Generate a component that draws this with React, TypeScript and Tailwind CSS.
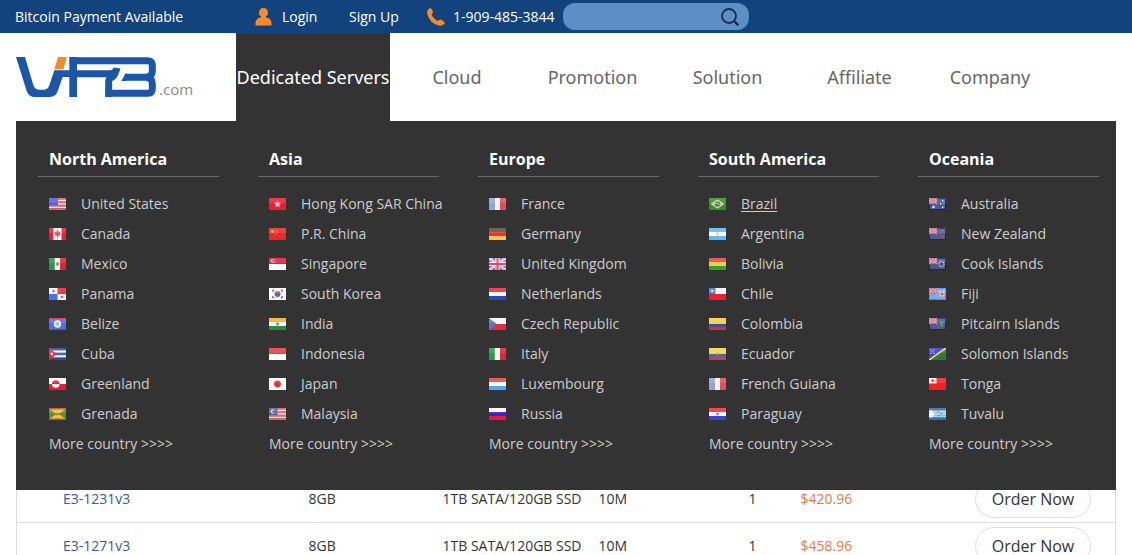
import { useState } from "react";
import type { ReactNode } from "react";

type FlagDef = { bands: string[]; vertical?: boolean; extra?: ReactNode };
type Country = { name: string; flag: FlagDef; underline?: boolean };

const RED = "#ee1c35";
const GREEN = "#27964a";
const NAVY = "#1d2463";

/* Small union jack used by the ensigns */
const jack = (
  <>
    <path d="M0 0h8v6H0z" fill="#5a5aa8" />
    <path d="M0 0l8 6M8 0L0 6" stroke="#e0a0b4" strokeWidth="1.2" />
    <path d="M4 0v6M0 3h8" stroke="#f3a3ae" strokeWidth="1.8" />
    <path d="M4 0v6M0 3h8" stroke="#dd4c5e" strokeWidth="0.8" />
  </>
);

const ensign = (field: string, badge: ReactNode): FlagDef => ({
  bands: [field],
  extra: (
    <>
      <path d="M1 1h15v10H1z" fill="#fff" opacity="0.25" />
      {jack}
      {badge}
    </>
  ),
});

const usStripes = ["#e8606c", "#fbe3e3", "#e8606c", "#fbe3e3", "#e8606c", "#fbe3e3", "#e8606c"];

/* ==========================================
    MENU DATA
    ========================================== */
const regions: { title: string; countries: Country[] }[] = [
  {
    title: "North America",
    countries: [
      { name: "United States", flag: { bands: usStripes, extra: <path d="M0 0h9v7H0z" fill="#5560d8" /> } },
      {
        name: "Canada",
        flag: {
          bands: [RED, "#f7f3f3", "#f7f3f3", RED],
          vertical: true,
          extra: <path d="M8.5 2l1 1.5 2 .5-.7 2 .2 1.5-2 .2v1.8H8V7.7l-2-.2.2-1.5L5.5 4l2-.5z" fill="#e4525f" />,
        },
      },
      { name: "Mexico", flag: { bands: [GREEN, "#f3f3ee", RED], vertical: true, extra: <ellipse cx="8.5" cy="6" rx="1.5" ry="2" fill="#a58c74" /> } },
      {
        name: "Panama",
        flag: {
          bands: ["#f8f4f6"],
          extra: (
            <>
              <path d="M8.5 0H17v6H8.5z" fill="#f0243c" />
              <path d="M0 6h8.5v6H0z" fill="#3f78ee" />
              <circle cx="4.5" cy="3" r="1.3" fill="#5c83e6" />
              <circle cx="13" cy="9" r="1.3" fill="#e05560" />
            </>
          ),
        },
      },
      {
        name: "Belize",
        flag: {
          bands: ["#5a6be0"],
          extra: (
            <>
              <path d="M0 .5h17M0 11.5h17" stroke="#d5255a" />
              <circle cx="8.5" cy="6" r="3.7" fill="#e4edf0" />
              <circle cx="8.5" cy="6" r="2" fill="#9cc9a8" />
            </>
          ),
        },
      },
      {
        name: "Cuba",
        flag: {
          bands: ["#2d49a3", "#f5f7fb", "#4567b8", "#f5f7fb", "#2d49a3"],
          extra: (
            <>
              <path d="M0 0l8 6-8 6z" fill="#e82c40" />
              <circle cx="2.8" cy="6" r="1.2" fill="#fff" />
            </>
          ),
        },
      },
      {
        name: "Greenland",
        flag: {
          bands: ["#fff", RED],
          extra: (
            <>
              <path d="M3 6a3.8 3.8 0 0 1 7.6 0z" fill={RED} />
              <path d="M3 6a3.8 3.8 0 0 0 7.6 0z" fill="#fff" />
            </>
          ),
        },
      },
      {
        name: "Grenada",
        flag: {
          bands: ["#d8402a"],
          extra: (
            <>
              <path d="M1 1.5h15v9H1z" fill="#f2c636" />
              <path d="M1 1.5L7.5 6 1 10.5zM16 1.5L9.5 6l6.5 4.5z" fill="#4b9a35" />
              <circle cx="8.5" cy="6" r="1.6" fill="#df6b2e" />
            </>
          ),
        },
      },
    ],
  },
  {
    title: "Asia",
    countries: [
      {
        name: "Hong Kong SAR China",
        flag: { bands: [RED], extra: <path d="M8.5 2.5l1 2.3 2.5.2-1.9 1.7.6 2.5-2.2-1.3-2.2 1.3.6-2.5L5 5l2.5-.2z" fill="#fbd3d6" /> },
      },
      {
        name: "P.R. China",
        flag: {
          bands: ["#e62a28"],
          extra: (
            <>
              <circle cx="3.5" cy="3.5" r="1.6" fill="#f8a83a" />
              <path d="M6.5 1.5h1v1h-1zM7.5 3.5h1v1h-1zM6.5 5.5h1v1h-1z" fill="#f8b040" />
            </>
          ),
        },
      },
      {
        name: "Singapore",
        flag: {
          bands: [RED, "#fff"],
          extra: (
            <>
              <circle cx="4" cy="3" r="2" fill="#fff" />
              <circle cx="4.9" cy="3" r="1.7" fill={RED} />
              <circle cx="5.7" cy="3" r=".8" fill="#fbb" />
            </>
          ),
        },
      },
      {
        name: "South Korea",
        flag: {
          bands: ["#fff"],
          extra: (
            <>
              <path d="M5.5 6a3 3 0 0 1 6 0z" fill="#d8455c" />
              <path d="M5.5 6a3 3 0 0 0 6 0z" fill="#4a67b5" />
              <path d="M3 3.5L5 2M12 2l2 1.5M3 8.5L5 10M12 10l2-1.5" stroke="#555" strokeWidth="1.3" />
            </>
          ),
        },
      },
      { name: "India", flag: { bands: ["#f8b02c", "#f6f6f0", "#2f8a3b"], extra: <circle cx="8.5" cy="6" r="1.7" fill="#8793ad" /> } },
      { name: "Indonesia", flag: { bands: ["#ea3a45", "#fff"] } },
      { name: "Japan", flag: { bands: ["#fff"], extra: <circle cx="8.5" cy="6" r="3.4" fill="#ef2b31" /> } },
      {
        name: "Malaysia",
        flag: {
          bands: usStripes,
          extra: (
            <>
              <path d="M0 0h8.5v7H0z" fill="#5a5c9c" />
              <circle cx="4" cy="3.5" r="2.2" fill="#f0dfa8" />
              <circle cx="4.9" cy="3.5" r="1.6" fill="#5a5c9c" />
            </>
          ),
        },
      },
    ],
  },
  {
    title: "Europe",
    countries: [
      { name: "France", flag: { bands: ["#93a3dc", "#f1f3f7", "#ee4a55"], vertical: true } },
      { name: "Germany", flag: { bands: ["#55504c", "#e2382f", "#f3c556"] } },
      {
        name: "United Kingdom",
        flag: {
          bands: ["#6f6cc0"],
          extra: (
            <>
              <path d="M0 0l17 12M17 0L0 12" stroke="#f6e8f0" strokeWidth="2.6" />
              <path d="M0 0l17 12M17 0L0 12" stroke="#e88a9a" strokeWidth=".8" />
              <path d="M8.5 0v12M0 6h17" stroke="#fff" strokeWidth="4" />
              <path d="M8.5 0v12M0 6h17" stroke="#e5485c" strokeWidth="2.2" />
            </>
          ),
        },
      },
      { name: "Netherlands", flag: { bands: ["#ee2b36", "#f8f8fa", "#2350ac"] } },
      { name: "Czech Republic", flag: { bands: ["#f8f8fa", "#ea2b3b"], extra: <path d="M0 0l8 6-8 6z" fill="#4d7fc0" /> } },
      { name: "Italy", flag: { bands: ["#24a148", "#f6f6f2", RED], vertical: true } },
      { name: "Luxembourg", flag: { bands: ["#f0453f", "#fafafa", "#55a8f4"] } },
      { name: "Russia", flag: { bands: ["#fafafa", "#3c1fd6", "#ee1838"] } },
    ],
  },
  {
    title: "South America",
    countries: [
      {
        name: "Brazil",
        underline: true,
        flag: {
          bands: ["#2f8f2d"],
          extra: (
            <>
              <path d="M1.5 6l7-4.8 7 4.8-7 4.8z" fill="#e6dd55" />
              <circle cx="8.5" cy="6" r="2.8" fill="#4a6cb8" />
              <path d="M6 5.4q2.5-.4 5 1.4" stroke="#dfe9e4" strokeWidth=".7" fill="none" />
            </>
          ),
        },
      },
      { name: "Argentina", flag: { bands: ["#62b8f2", "#fdfdfb", "#62b8f2"], extra: <circle cx="8.5" cy="6" r="1.7" fill="#f1d68a" /> } },
      { name: "Bolivia", flag: { bands: ["#f04438", "#f2cf3e", "#2aa52f"] } },
      {
        name: "Chile",
        flag: {
          bands: ["#fafafc", "#ee1f2f"],
          extra: (
            <>
              <path d="M0 0h6.5v6H0z" fill="#3c7ae0" />
              <circle cx="3.2" cy="3" r="1.3" fill="#dde8fa" />
            </>
          ),
        },
      },
      { name: "Colombia", flag: { bands: ["#f8cf3f", "#f8cf3f", "#3c4f9c", "#df2b3f"] } },
      { name: "Ecuador", flag: { bands: ["#f5d548", "#f5d548", "#4d679f", "#e2343f"], extra: <circle cx="8.5" cy="6" r="1.3" fill="#b59c63" /> } },
      { name: "French Guiana", flag: { bands: ["#93a3dc", "#f1f3f7", "#ee4a55"], vertical: true } },
      { name: "Paraguay", flag: { bands: ["#ef2f3c", "#fafafa", "#3848cc"], extra: <circle cx="8.5" cy="6" r="1.6" fill="#d8806c" /> } },
    ],
  },
  {
    title: "Oceania",
    countries: [
      {
        name: "Australia",
        flag: ensign(
          "#0f2770",
          <>
            <circle cx="4.5" cy="9" r="1.3" fill="#e3e8f7" />
            <path d="M11 5h1.4v1.4H11zM13 2h1.4v1.4H13zM14.5 5h1v1h-1zM13 8.5h1.4v1.4H13z" fill="#e3e8f7" />
          </>
        ),
      },
      { name: "New Zealand", flag: ensign(NAVY, <path d="M11 4.5h1.3v1.3H11zM13 2h1.3v1.3H13zM14.5 4.5h1v1h-1zM13 8h1.4v1.4H13z" fill="#d35a72" />) },
      { name: "Cook Islands", flag: ensign("#14235f", <circle cx="12.5" cy="6" r="2.6" fill="none" stroke="#c6cee6" strokeWidth="1.2" strokeDasharray="1.2 .8" />) },
      {
        name: "Fiji",
        flag: ensign(
          "#4a8ff0",
          <>
            <path d="M10.5 3h5v4.5L13 10l-2.5-2.5z" fill="#f4e3e0" />
            <path d="M13 3v7M10.5 6h5" stroke="#e2604c" strokeWidth="1.3" />
          </>
        ),
      },
      { name: "Pitcairn Islands", flag: ensign("#1c2468", <path d="M11 3.5h3.5V7l-1.7 2.5L11 7z" fill="#4a9a63" />) },
      {
        name: "Solomon Islands",
        flag: {
          bands: ["#2a7a34"],
          extra: (
            <>
              <path d="M0 0h17L0 12z" fill="#3d3fc4" />
              <path d="M0 12L17 0" stroke="#f0e060" strokeWidth="1.6" />
              <path d="M1.5 1.5h1v1h-1zM4.5 1.5h1v1h-1zM3 3.2h1v1H3zM1.5 5h1v1h-1zM4.5 5h1v1h-1z" fill="#fff" />
            </>
          ),
        },
      },
      {
        name: "Tonga",
        flag: {
          bands: ["#f41f28"],
          extra: (
            <>
              <path d="M0 0h7.5v5.5H0z" fill="#fbeeee" />
              <path d="M3.7 1v3.5M2 2.7h3.5" stroke="#ee3540" strokeWidth="1.2" />
            </>
          ),
        },
      },
      {
        name: "Tuvalu",
        flag: {
          bands: ["#3e6ca0", "#a9dcf0", "#a9dcf0", "#a9dcf0", "#3e6ca0"],
          extra: (
            <>
              <path d="M0 2.5h3L6 6 3 9.5H0z" fill="#eef6f2" />
              <path d="M8 3.5h1.5V5H8zM11.5 5H13v1.5h-1.5zM9 7h1.5v1.5H9z" fill="#5f9a7a" />
            </>
          ),
        },
      },
    ],
  },
];

const navItems = [
  { label: "Cloud", width: "w-[134px]" },
  { label: "Promotion", width: "w-[137px]" },
  { label: "Solution", width: "w-[133px]" },
  { label: "Affiliate", width: "w-[131px]" },
  { label: "Company", width: "w-[130px]" },
];

const servers = [
  { cpu: "E3-1231v3", ram: "8GB", disk: "1TB SATA/120GB SSD", port: "10M", ip: "1", price: "$420.96" },
  { cpu: "E3-1271v3", ram: "8GB", disk: "1TB SATA/120GB SSD", port: "10M", ip: "1", price: "$458.96" },
];

function Flag({ bands, vertical, extra }: FlagDef) {
  const w = vertical ? 17 / bands.length : 17;
  const h = vertical ? 12 : 12 / bands.length;
  return (
    <svg viewBox="0 0 17 12" className="h-3 w-[17px] shrink-0" aria-hidden="true">
      {bands.map((color, i) => (
        <rect key={i} x={vertical ? i * w : 0} y={vertical ? 0 : i * h} width={w} height={h} fill={color} />
      ))}
      {extra}
      <path d="M0 0h17v5H0z" fill="#fff" opacity="0.12" />
    </svg>
  );
}

function Logo() {
  return (
    <a href="#home" aria-label="VPB.com" className="flex items-end">
      <svg viewBox="48 171 420 120" className="h-10 w-[140px]" fill="none" aria-hidden="true">
        <path d="M48 171h27l25 84q4 14 17 14h15q12 0 16-13l15-45h45v-40h23v120h-23v-60h-20l-15 43q-6 17-23 17h-45q-19 0-25-18z" fill="#1b57a6" />
        <g stroke="#1b57a6" strokeWidth="21">
          <path d="M209 182h232q16 0 16 14v17q0 18-20 19h-62M437 232q20 1 20 19v15q0 14-16 14H316" />
          <path d="M225 221h104q19 0 22-17M347 216q-4 12-12 16-9 4-9 14v45" />
        </g>
        <path d="M380 221h-4l-12 22h16z" fill="#1b57a6" />
        <path d="M174 171h27l-11 37h-27z" fill="#f58a2c" />
      </svg>
      <span className="pl-[3px] text-[15px] leading-4 text-[#8a8a8a]">.com</span>
    </a>
  );
}

function TopBar() {
  return (
    <div className="flex h-[33px] items-center bg-[#13437c] pl-[15px] text-sm text-white">
      <span className="w-60">Bitcoin Payment Available</span>
      <a href="#login" className="flex w-[94px] items-center gap-2.5">
        <svg viewBox="0 0 17 18" className="h-[18px] w-[17px]" fill="#f98a2b" aria-hidden="true">
          <path d="M8.5 0a4.5 4.7 0 0 1 2.5 8.6v.8c3.5.5 5.5 2.3 5.5 5.6v2.5H.5V15c0-3.3 2-5.1 5.5-5.6v-.8A4.5 4.7 0 0 1 8.5 0z" />
        </svg>
        Login
      </a>
      <a href="#signup" className="w-[78px]">Sign Up</a>
      <a href="tel:19094853844" className="flex w-[136px] items-center gap-2">
        <svg viewBox="0 0 18 18" className="size-[18px]" fill="#f98a2b" aria-hidden="true">
          <path d="M1.2 1.2Q2.5-.2 4 .3q1.5 1.5 2 3.6 0 1.2-1.5 2.2.8 3.5 5.5 6.6 1.3.4 2.5-1 1.5-.5 4.8 2.2.8.9.2 1.8-2 2.5-5 2.1Q2.5 15.5.2 5.5 0 3 1.2 1.2z" />
        </svg>
        1-909-485-3844
      </a>
      <form className="flex h-[27px] w-[186px] items-center rounded-xl bg-[#5b8fc6] pr-2.5 pl-3">
        <input type="search" aria-label="Search" className="min-w-0 flex-1 bg-transparent outline-none" />
        <button type="button" aria-label="Search">
          <svg viewBox="0 0 18 18" className="size-[18px]" fill="none" stroke="#152c46" strokeWidth="1.8" aria-hidden="true">
            <circle cx="8" cy="8" r="7" />
            <path d="M13 13l4.3 4.3" strokeWidth="2.4" />
          </svg>
        </button>
      </form>
    </div>
  );
}

function MegaMenu() {
  return (
    <div className="absolute inset-x-4 top-full z-10 grid h-[369px] grid-cols-5 bg-[#333333] text-sm text-[#cccccc]">
      {regions.map((region) => (
        <section key={region.title} className="pt-[25px] pr-[17px] pl-[22px]">
          <h2 className="border-b border-[#686868] pb-1 pl-[11px] text-base leading-[26px] font-bold text-white">{region.title}</h2>
          <ul className="pt-3 pl-[11px]">
            {region.countries.map((country) => (
              <li key={country.name} className="flex h-[30px] items-center gap-[15px] whitespace-nowrap">
                <Flag {...country.flag} />
                <a href="#country" className={country.underline ? "underline underline-offset-2" : "hover:underline"}>{country.name}</a>
              </li>
            ))}
            <li className="flex h-[30px] items-center">
              <a href="#more">More country &gt;&gt;&gt;&gt;</a>
            </li>
          </ul>
        </section>
      ))}
    </div>
  );
}

export default function App() {
  const [menuOpen, setMenuOpen] = useState(true);

  return (
    <div className="h-screen overflow-hidden bg-white font-['Open_Sans','Noto_Sans',sans-serif]">
      <TopBar />

      {/* ==========================================
          MAIN NAVIGATION
          ========================================== */}
      <header className="relative flex h-[88px] items-center pl-4">
        <div className="w-[220px]">
          <Logo />
        </div>
        <nav className="flex h-full items-center font-['Noto_Sans',sans-serif] text-lg text-[#666666]">
          <button
            type="button"
            aria-expanded={menuOpen}
            onClick={() => setMenuOpen(!menuOpen)}
            className="h-full w-[154px] bg-[#333333] text-center whitespace-nowrap text-white"
          >
            Dedicated Servers
          </button>
          {navItems.map((item) => (
            <a key={item.label} href="#nav" className={`${item.width} text-center`}>{item.label}</a>
          ))}
        </nav>
        {menuOpen && <MegaMenu />}
      </header>

      {/* ==========================================
          SERVER LIST
          ========================================== */}
      <main className="px-4 pt-[354px]">
        <table className="w-full table-fixed border-collapse border border-[#dcdcdc] text-sm text-[#333333]">
          <colgroup>
            <col className="w-[246px]" />
            <col className="w-[134px]" />
            <col className="w-[156px]" />
            <col className="w-[150px]" />
            <col className="w-[52px]" />
            <col className="w-[134px]" />
            <col />
          </colgroup>
          <tbody>
            {servers.map((server) => (
              <tr key={server.cpu} className="h-[47px] border-b border-[#dcdcdc] whitespace-nowrap">
                <td className="pl-[46px]"><a href="#server" className="text-[#3a55a4]">{server.cpu}</a></td>
                <td className="pl-[46px]">{server.ram}</td>
                <td className="pl-[46px]">{server.disk}</td>
                <td className="pl-[46px]">{server.port}</td>
                <td className="pl-[46px]">{server.ip}</td>
                <td className="pl-[46px] text-[#e87a45]">{server.price}</td>
                <td className="pr-6 text-right">
                  <button type="button" className="h-[38px] w-[116px] rounded-full border border-[#dcdfe0] text-center text-base">Order Now</button>
                </td>
              </tr>
            ))}
          </tbody>
        </table>
      </main>
    </div>
  );
}
